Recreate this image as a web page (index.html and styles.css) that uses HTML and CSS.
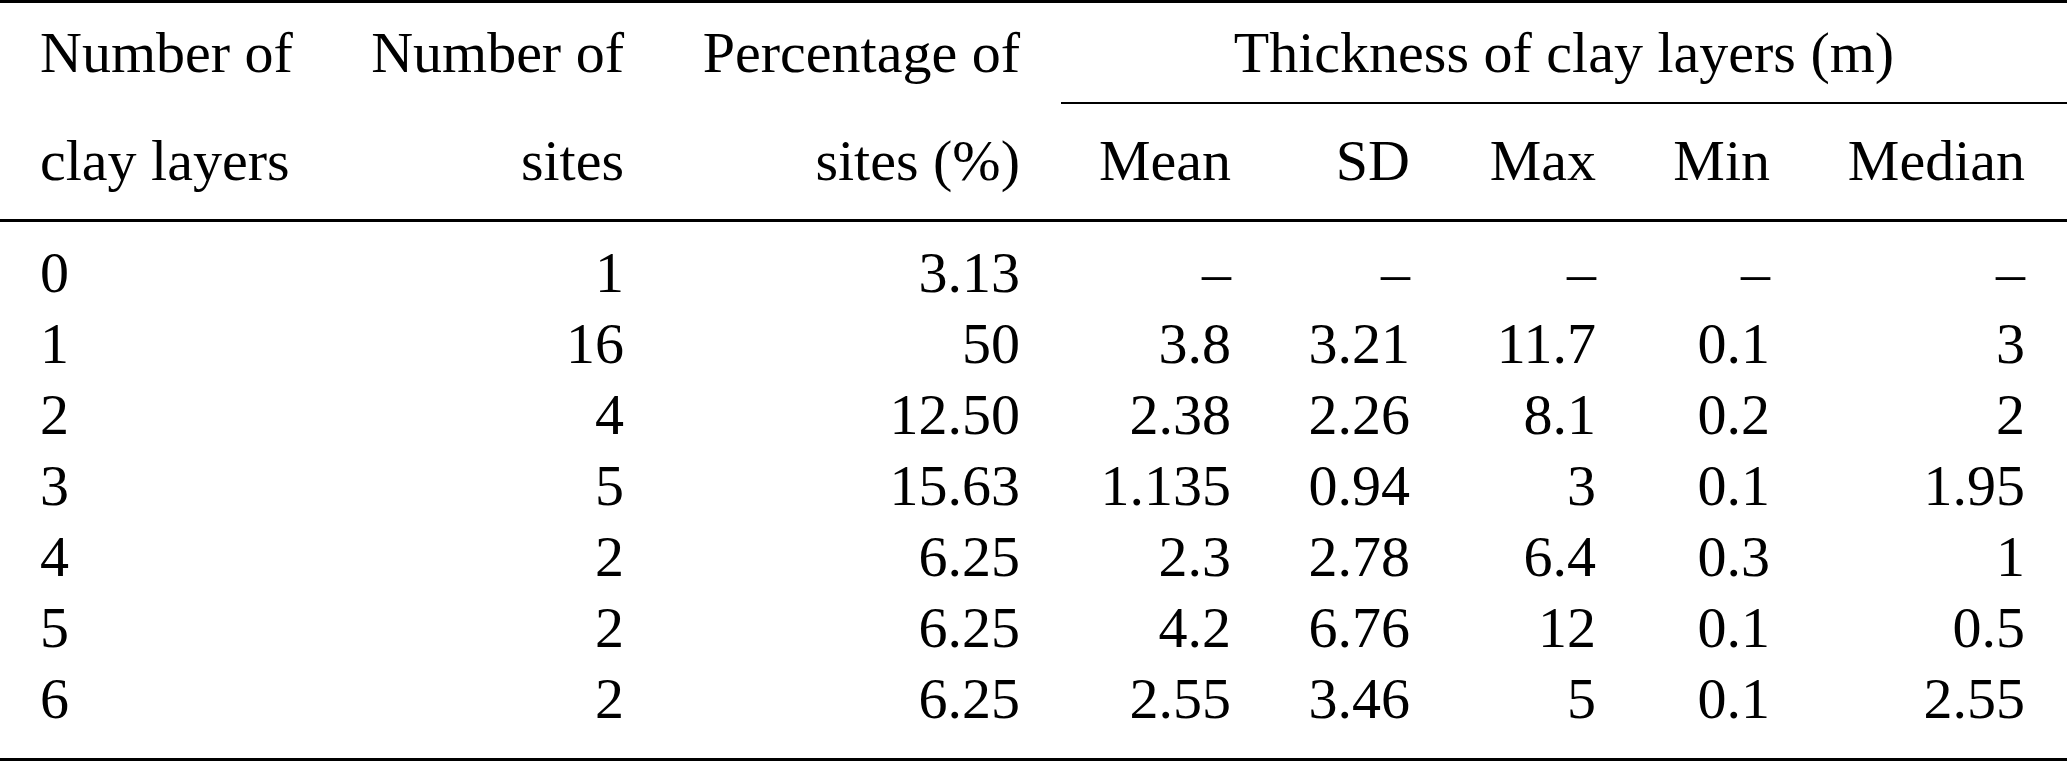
FILE: index.html
```html
<!DOCTYPE html>
<html lang="en">
<head>
<meta charset="utf-8">
<title>Clay layers</title>
<link rel="stylesheet" href="styles.css">
</head>
<body>
<table class="tbl">
  <colgroup>
    <col class="c1"><col class="c2"><col class="c3"><col class="c4"><col class="c5"><col class="c6"><col class="c7"><col class="c8">
  </colgroup>
  <thead>
    <tr class="h1">
      <th class="left">Number of</th>
      <th>Number of</th>
      <th>Percentage of</th>
      <th colspan="5" class="group"><div class="group-label">Thickness of clay layers (m)</div></th>
    </tr>
    <tr class="h2">
      <th class="left">clay layers</th>
      <th>sites</th>
      <th>sites (%)</th>
      <th>Mean</th>
      <th>SD</th>
      <th>Max</th>
      <th>Min</th>
      <th class="last">Median</th>
    </tr>
  </thead>
  <tbody>
    <tr><td class="left">0</td><td>1</td><td>3.13</td><td>–</td><td>–</td><td>–</td><td>–</td><td class="last">–</td></tr>
    <tr><td class="left">1</td><td>16</td><td>50</td><td>3.8</td><td>3.21</td><td>11.7</td><td>0.1</td><td class="last">3</td></tr>
    <tr><td class="left">2</td><td>4</td><td>12.50</td><td>2.38</td><td>2.26</td><td>8.1</td><td>0.2</td><td class="last">2</td></tr>
    <tr><td class="left">3</td><td>5</td><td>15.63</td><td>1.135</td><td>0.94</td><td>3</td><td>0.1</td><td class="last">1.95</td></tr>
    <tr><td class="left">4</td><td>2</td><td>6.25</td><td>2.3</td><td>2.78</td><td>6.4</td><td>0.3</td><td class="last">1</td></tr>
    <tr><td class="left">5</td><td>2</td><td>6.25</td><td>4.2</td><td>6.76</td><td>12</td><td>0.1</td><td class="last">0.5</td></tr>
    <tr><td class="left">6</td><td>2</td><td>6.25</td><td>2.55</td><td>3.46</td><td>5</td><td>0.1</td><td class="last">2.55</td></tr>
  </tbody>
</table>
</body>
</html>
```
FILE: styles.css
```css
html, body {
  margin: 0;
  padding: 0;
  background: #fff;
}

.tbl {
  width: 2067px;
  table-layout: fixed;
  border-collapse: collapse;
  border-spacing: 0;
  font-family: "Liberation Serif", "Times New Roman", serif;
  font-size: 58px;
  color: #000;
}

.c1 { width: 330px; }
.c2 { width: 294px; }
.c3 { width: 396px; }
.c4 { width: 211px; }
.c5 { width: 179px; }
.c6 { width: 186px; }
.c7 { width: 174px; }
.c8 { width: 297px; }

.tbl th,
.tbl td {
  padding: 0;
  font-weight: normal;
  line-height: 71px;
  text-align: right;
  vertical-align: top;
  white-space: nowrap;
}

.tbl .left {
  text-align: left;
  padding-left: 40px;
}

.tbl .last {
  padding-right: 42px;
}

.h1 th {
  border-top: 3px solid #000;
  padding-top: 14px;
}

.h1 th.group {
  padding-left: 41px;
}

.group-label {
  text-align: center;
  padding-bottom: 14px;
  border-bottom: 2px solid #000;
}

.h2 th {
  padding-top: 21px;
  padding-bottom: 23px;
  border-bottom: 3px solid #000;
}

.tbl tbody tr:first-child td {
  padding-top: 15px;
}

.tbl tbody tr:last-child td {
  padding-bottom: 24px;
  border-bottom: 3px solid #000;
}
```
